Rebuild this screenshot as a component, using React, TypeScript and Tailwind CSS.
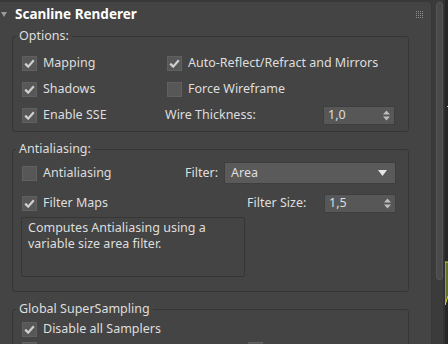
import type { ReactNode } from "react";

function Check({ on }: { on?: boolean }) {
  return (
    <span className="flex h-[15px] w-[15px] shrink-0 items-center justify-center border border-[#606060] bg-[#575757]">
      {on && (
        <svg width="11" height="9" viewBox="0 0 11 9">
          <path d="M1.2 4.6 4.2 7.6 9.8 1.2" stroke="#d0d0d0" strokeWidth="2.2" fill="none" />
        </svg>
      )}
    </span>
  );
}

function CheckLabel({ on, children }: { on?: boolean; children: ReactNode }) {
  return (
    <span className="flex items-center gap-[6px] whitespace-nowrap">
      <Check on={on} />
      <span>{children}</span>
    </span>
  );
}

function Spinner({ value }: { value: string }) {
  return (
    <div className="flex h-[19px] w-[72px] items-center justify-between border border-[#3e3e3e] bg-[#575757] pl-[4px] pr-[4px]">
      <span>{value}</span>
      <svg width="7" height="11" viewBox="0 0 7 11">
        <path d="M3.5 0.5 7 4.5H0Z" fill="#bdbdbd" />
        <path d="M0 6.5H7L3.5 10.5Z" fill="#bdbdbd" />
      </svg>
    </div>
  );
}

function Group({ title, children }: { title: string; children: ReactNode }) {
  return (
    <fieldset className="ml-[12px] mt-[9px] w-[397px] rounded-[3px] border border-[#363636]">
      <legend className="ml-[3px] px-[3px] leading-[16px]">{title}</legend>
      {children}
    </fieldset>
  );
}

export default function App() {
  return (
    <div className="flex h-[344px] w-[448px] overflow-hidden bg-[#393939] font-['Noto_Sans',sans-serif] text-[12.5px] text-[#dedede]">
      <div className="mt-[2px] flex w-[432px] shrink-0 flex-col rounded-tr-[4px] border-r border-[#383838] bg-[#444444]">
        <div className="flex h-[24px] shrink-0 items-center justify-between pl-[1px] pr-[8px]">
          <div className="flex items-center gap-[8px]">
            <svg width="6" height="5" viewBox="0 0 6 5">
              <path d="M0 0H6L3 5Z" fill="#9a9a9a" />
            </svg>
            <span className="text-[13.5px] font-bold text-white">Scanline Renderer</span>
          </div>
          <svg width="7" height="7" viewBox="0 0 7 7">
            {[0, 2, 4, 6].map((y) =>
              [0, 2, 4, 6].map((x) => <rect key={`${x}-${y}`} x={x} y={y} width="1" height="1" fill="#8c8c8c" />)
            )}
          </svg>
        </div>

        <fieldset className="ml-[12px] mt-[2px] w-[397px] rounded-[3px] border border-[#363636]">
          <legend className="ml-[3px] px-[3px] leading-[16px]">Options:</legend>
          <div className="pb-[3px] pl-[9px] pt-[6px]">
            <div className="flex h-[26px] items-center">
              <div className="w-[145px]">
                <CheckLabel on>Mapping</CheckLabel>
              </div>
              <CheckLabel on>Auto-Reflect/Refract and Mirrors</CheckLabel>
            </div>
            <div className="flex h-[26px] items-center">
              <div className="w-[145px]">
                <CheckLabel on>Shadows</CheckLabel>
              </div>
              <CheckLabel>Force Wireframe</CheckLabel>
            </div>
            <div className="flex h-[26px] items-center">
              <div className="w-[143px]">
                <CheckLabel on>Enable SSE</CheckLabel>
              </div>
              <span className="w-[158px]">Wire Thickness:</span>
              <Spinner value="1,0" />
            </div>
          </div>
        </fieldset>

        <Group title="Antialiasing:">
          <div className="pb-[14px] pl-[9px] pt-[4px]">
            <div className="flex h-[24px] items-center">
              <div className="w-[163px]">
                <CheckLabel>Antialiasing</CheckLabel>
              </div>
              <span className="w-[39px]">Filter:</span>
              <div className="flex h-[22px] w-[172px] items-center justify-between border border-[#3e3e3e] bg-[#5a5a5a] pl-[6px] pr-[8px]">
                <span>Area</span>
                <svg width="9" height="6" viewBox="0 0 9 6">
                  <path d="M0 0H9L4.5 6Z" fill="#e6e6e6" />
                </svg>
              </div>
            </div>
            <div className="mt-[6px] flex h-[24px] items-center">
              <div className="w-[225px]">
                <CheckLabel on>Filter Maps</CheckLabel>
              </div>
              <span className="w-[77px]">Filter Size:</span>
              <Spinner value="1,5" />
            </div>
            <div className="-ml-[1px] mt-[2px] h-[60px] w-[224px] rounded-[2px] border border-[#363636] pl-[6px] pt-[2px] leading-[16px]">
              Computes Antialiasing using a
              <br />
              variable size area filter.
            </div>
          </div>
        </Group>

        <Group title="Global SuperSampling">
          <div className="pl-[9px] pt-[2px]">
            <div className="flex h-[20px] items-center">
              <CheckLabel on>Disable all Samplers</CheckLabel>
            </div>
            <div className="flex h-[20px] items-center">
              <div className="w-[226px]">
                <Check />
              </div>
              <Check />
            </div>
          </div>
        </Group>
      </div>

      <div className="w-[11px] shrink-0 bg-[#3b3b3b] pl-[4px] pt-[2px]">
        <div className="h-[278px] w-[7px] rounded-[3px] border border-[#555555] bg-[#4a4a4a]" />
      </div>
      <div className="w-[2px] shrink-0 bg-[#333333]" />
      <div className="flex-1 bg-[#262626]">
        <svg width="3" height="344" viewBox="0 0 3 344" className="block">
          <path d="M2 107l1-1" stroke="#cfcfcf" strokeWidth="1" />
          <path d="M0 262H3V296L0 305Z" fill="#5f6e2a" />
          <path d="M0 262V305M0 262H3M0 305L3 296" stroke="#d8d820" strokeWidth="1" fill="none" />
        </svg>
      </div>
    </div>
  );
}
